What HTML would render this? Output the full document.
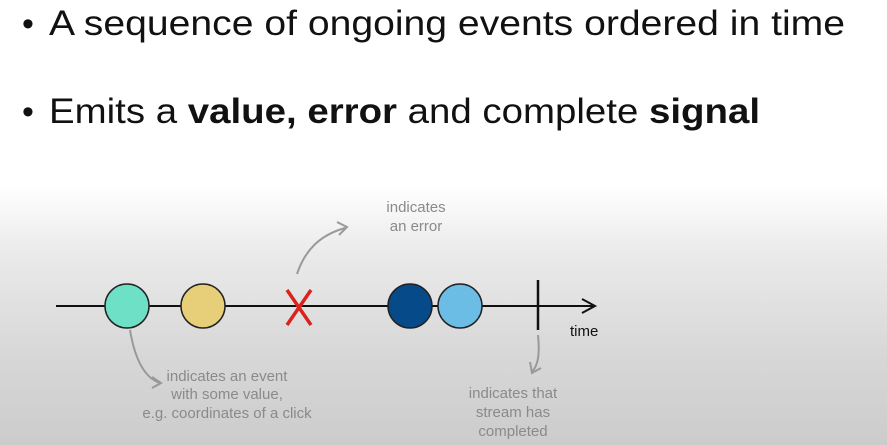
<!DOCTYPE html>
<html><head><style>
html,body{margin:0;padding:0;width:887px;height:445px;overflow:hidden}
body{background:linear-gradient(to bottom,#ffffff 0px,#ffffff 185px,#ebebeb 250px,#d8d8d8 350px,#cccccc 445px)}
</style></head><body>
<svg width="887" height="445" xmlns="http://www.w3.org/2000/svg" style="position:absolute;left:0;top:0">
<g font-family="Liberation Sans, sans-serif" fill="#111">
<text x="22" y="35" font-size="34">•</text>
<text x="49" y="35" font-size="35" textLength="796" lengthAdjust="spacingAndGlyphs">A sequence of ongoing events ordered in time</text>
<text x="22" y="123" font-size="34">•</text>
<text x="49" y="123" font-size="35" textLength="711" lengthAdjust="spacingAndGlyphs">Emits a <tspan font-weight="bold">value, error</tspan>  and complete <tspan font-weight="bold">signal</tspan></text>
</g>
<line x1="56" y1="306" x2="594" y2="306" stroke="#111" stroke-width="2"/>
<path d="M582 299 L595 306 L582 313" fill="none" stroke="#111" stroke-width="2"/>
<circle cx="127" cy="306" r="22" fill="#6ee0c6" stroke="#222" stroke-width="1.5"/>
<circle cx="203" cy="306" r="22" fill="#e6cf78" stroke="#222" stroke-width="1.5"/>
<circle cx="410" cy="306" r="22" fill="#064a8a" stroke="#222" stroke-width="1.5"/>
<circle cx="460" cy="306" r="22" fill="#6bbde6" stroke="#222" stroke-width="1.5"/>
<path d="M287 290 L311 325 M311 290 L287 325" stroke="#d9231c" stroke-width="3.5" fill="none"/>
<line x1="538" y1="280" x2="538" y2="330" stroke="#111" stroke-width="2.5"/>
<text x="570" y="336" font-family="Liberation Sans, sans-serif" font-size="15" fill="#111">time</text>
<g fill="none" stroke="#999" stroke-width="2">
<path d="M297 274 C305 250 320 235 345 228"/>
<path d="M337 222 L347 227 L339 235"/>
<path d="M130 330 C135 360 145 378 160 383"/>
<path d="M152 377 L161 383 L152 388"/>
<path d="M538 335 C540 355 538 365 532 372"/>
<path d="M530 362 L532 373 L541 368"/>
</g>
<g font-family="Liberation Sans, sans-serif" font-size="15" fill="#8a8a8a" text-anchor="middle">
<text x="416" y="212">indicates</text>
<text x="416" y="231">an error</text>
<text x="227" y="381">indicates an event</text>
<text x="227" y="399">with some value,</text>
<text x="227" y="418">e.g. coordinates of a click</text>
<text x="513" y="398">indicates that</text>
<text x="513" y="417">stream has</text>
<text x="513" y="436">completed</text>
</g>
</svg>
</body></html>
